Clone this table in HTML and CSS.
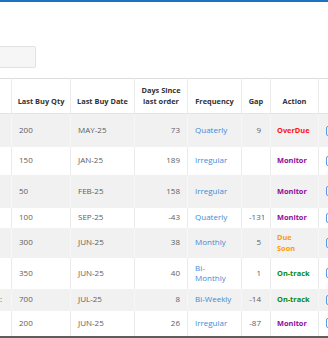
FILE: index.html
```html
<!DOCTYPE html>
<html lang="en">
<head>
<meta charset="utf-8">
<title>Purchase follow-up</title>
<link rel="stylesheet" href="styles.css">
</head>
<body>
<div class="topbar"></div>
<div class="filters">
  <div class="search"></div>
</div>
<div class="table-wrap">
  <table class="grid">
    <colgroup>
      <col class="c0"><col class="c1"><col class="c2"><col class="c3"><col class="c4"><col class="c5"><col class="c6"><col class="c7">
    </colgroup>
    <thead>
      <tr>
        <th></th>
        <th>Last Buy Qty</th>
        <th>Last Buy Date</th>
        <th>Days Since<br>last order</th>
        <th>Frequency</th>
        <th>Gap</th>
        <th>Action</th>
        <th></th>
      </tr>
    </thead>
    <tbody>
      <tr class="odd h33">
        <td></td><td>200</td><td>MAY-25</td><td class="num">73</td><td><a class="freq">Quaterly</a></td><td class="num gap">9</td><td class="act overdue">OverDue</td><td><span class="btn"></span></td>
      </tr>
      <tr class="h28">
        <td></td><td>150</td><td>JAN-25</td><td class="num">189</td><td><a class="freq">Irregular</a></td><td class="num gap"></td><td class="act monitor">Monitor</td><td><span class="btn"></span></td>
      </tr>
      <tr class="odd h33">
        <td></td><td>50</td><td>FEB-25</td><td class="num">158</td><td><a class="freq">Irregular</a></td><td class="num gap"></td><td class="act monitor">Monitor</td><td><span class="btn"></span></td>
      </tr>
      <tr class="h20">
        <td></td><td>100</td><td>SEP-25</td><td class="num">-43</td><td><a class="freq">Quaterly</a></td><td class="num gap">-131</td><td class="act monitor">Monitor</td><td><span class="btn"></span></td>
      </tr>
      <tr class="odd h30">
        <td></td><td>300</td><td>JUN-25</td><td class="num">38</td><td><a class="freq">Monthly</a></td><td class="num gap">5</td><td class="act soon">Due<br>Soon</td><td><span class="btn"></span></td>
      </tr>
      <tr class="h31">
        <td></td><td>350</td><td>JUN-25</td><td class="num">40</td><td><a class="freq">Bi-<br>Monthly</a></td><td class="num gap">1</td><td class="act ontrack">On-track</td><td><span class="btn"></span></td>
      </tr>
      <tr class="odd h22">
        <td class="lead">:</td><td>700</td><td>JUL-25</td><td class="num">8</td><td><a class="freq">Bi-Weekly</a></td><td class="num gap">-14</td><td class="act ontrack">On-track</td><td><span class="btn"></span></td>
      </tr>
      <tr class="h25">
        <td></td><td>200</td><td>JUN-25</td><td class="num">26</td><td><a class="freq">Irregular</a></td><td class="num gap">-87</td><td class="act monitor">Monitor</td><td><span class="btn"></span></td>
      </tr>
    </tbody>
  </table>
</div>
<div class="scrollbar"></div>
</body>
</html>
```

FILE: styles.css
```css
html, body {
  margin: 0;
  padding: 0;
  overflow: hidden;
  background: #ffffff;
  font-family: "Open Sans", "Noto Sans", sans-serif;
}

.topbar {
  height: 2px;
  background: #1f71c5;
}

.filters {
  padding-top: 44px;
  height: 22px;
  display: flex;
}

.search {
  margin-left: -100px;
  width: 134px;
  height: 20px;
  background: #f6f6f6;
  border: 1px solid #e2e2e2;
  border-radius: 2px;
}

.table-wrap {
  margin-top: 10px;
  width: 328px;
  overflow: hidden;
}

.grid {
  margin-left: -49px;
  width: 447px;
  table-layout: fixed;
  border-collapse: collapse;
  font-size: 8px;
  line-height: 10.5px;
  color: #5e5e5e;
}

.c0 { width: 60px; }
.c1 { width: 59px; }
.c2 { width: 64px; }
.c3 { width: 53px; }
.c4 { width: 54px; }
.c5 { width: 29px; }
.c6 { width: 48px; }
.c7 { width: 80px; }

.grid th {
  font-size: 7.4px;
  font-weight: 700;
  color: #333333;
  text-align: center;
  vertical-align: bottom;
  padding: 6px 4px 7px;
  white-space: nowrap;
  border-top: 1px solid #dcdcdc;
  border-bottom: 1px solid #e4e4e4;
  border-left: 1px solid #ececec;
  border-right: 1px solid #ececec;
}

.grid td {
  padding: 0 7px;
  vertical-align: middle;
  text-align: left;
  border-left: 1px solid #ebebeb;
  border-right: 1px solid #ebebeb;
  white-space: nowrap;
}

.grid tbody tr.odd td {
  background: #f1f1f1;
  border-left-color: #f7f7f7;
  border-right-color: #f7f7f7;
}

.h20 { height: 20px; }
.h22 { height: 22px; }
.h25 { height: 25px; }
.h28 { height: 28px; }
.h30 { height: 30px; }
.h31 { height: 31px; }
.h33 { height: 33px; }

.grid td.num { text-align: right; }
.grid td.gap { padding-right: 9px; }
.grid td.lead { text-align: right; padding-right: 9px; }

.freq {
  color: #3f8ad6;
  text-decoration: none;
}

.grid td.act {
  font-size: 7.4px;
  font-weight: 700;
  padding-left: 6px;
}
.overdue { color: #ff1111; }
.monitor { color: #8e0a96; }
.soon { color: #ff9a00; }
.ontrack { color: #0a8a0a; }

.btn {
  display: inline-block;
  width: 16px;
  height: 8px;
  border: 1px solid #5a9ae0;
  border-radius: 2px;
  vertical-align: middle;
}

.scrollbar {
  height: 2px;
  background: #5e5e5e;
}
```
